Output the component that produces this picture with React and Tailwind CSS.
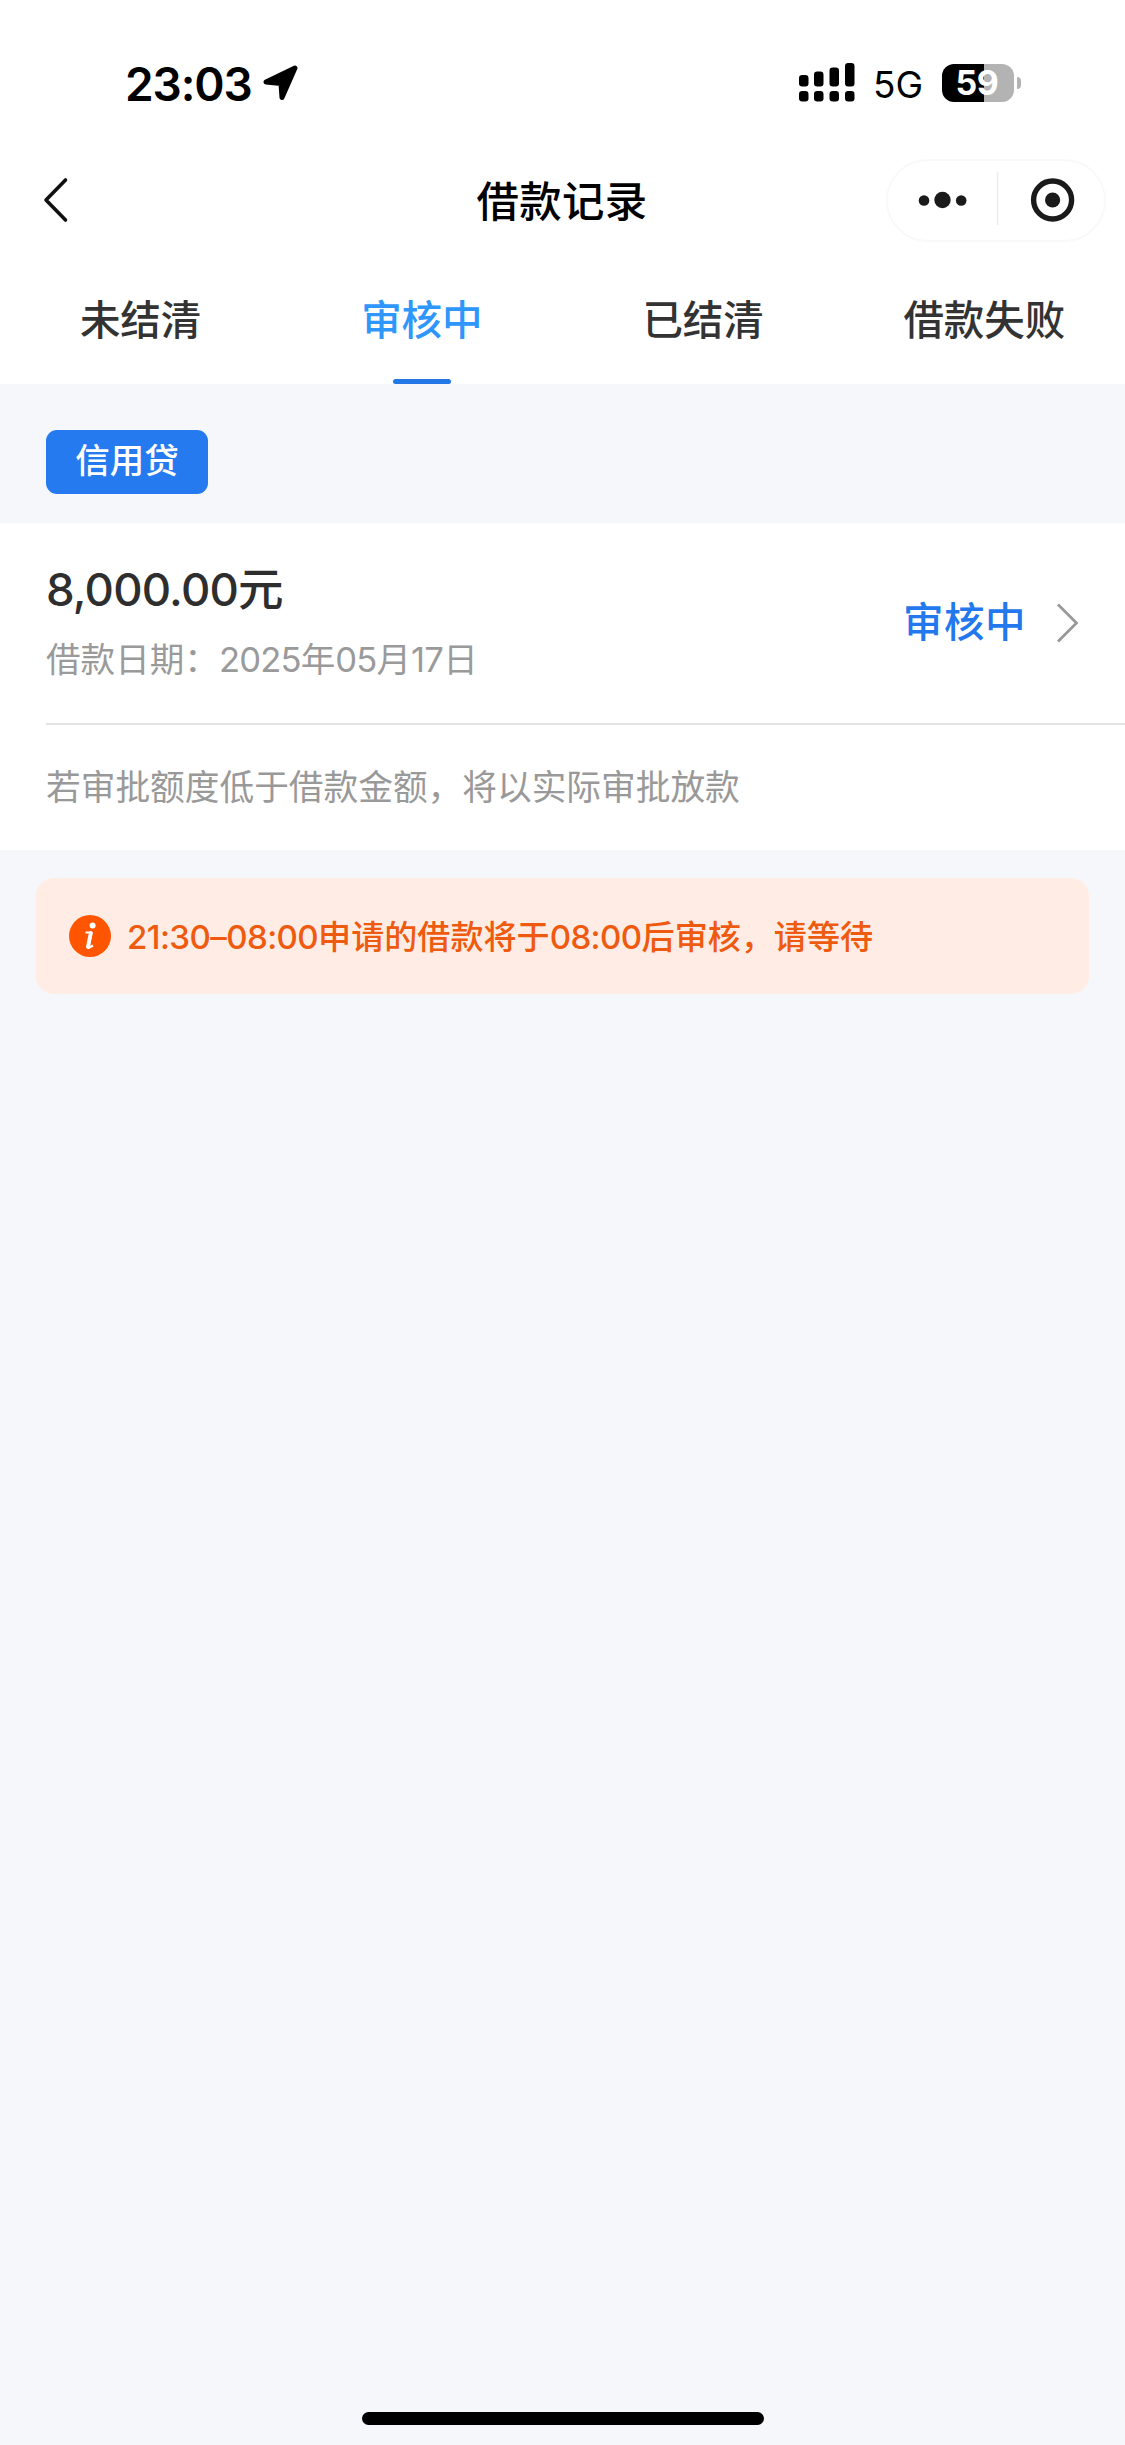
import { useState } from "react";

const tabs = [
  { id: "open", label: "未结清" },
  { id: "review", label: "审核中" },
  { id: "settled", label: "已结清" },
  { id: "failed", label: "借款失败" },
];

function StatusBar() {
  return (
    <div className="flex h-[146px] items-start justify-between pl-[125px] pr-[104px] pt-[60px]">
      <div className="flex h-[46px] items-center">
        <span className="w-[138px] pt-px text-[46px] font-semibold leading-[46px] tracking-[-1.1px] text-black">23:03</span>
        <svg className="h-[36px] w-[36px]" viewBox="0 0 36 36">
          <path d="M32 3 L19 32.5 L18 18.5 L3 17 Z" fill="#000" stroke="#000" strokeWidth="5" strokeLinejoin="round" />
        </svg>
      </div>

      <div className="flex h-[46px] items-center">
        {/* Dual SIM signal */}
        <svg className="h-[40px] w-[56px]" viewBox="0 0 56 40" fill="#000">
          <rect x="0" y="12" width="9.5" height="11.5" rx="3.2" />
          <rect x="15" y="8.5" width="9.5" height="15" rx="3.2" />
          <rect x="30.5" y="4.5" width="9.5" height="19" rx="3.2" />
          <rect x="46" y="0" width="9.5" height="23.5" rx="3.2" />
          <rect x="0" y="28" width="9.5" height="10.5" rx="3.2" />
          <rect x="15" y="28" width="9.5" height="10.5" rx="3.2" />
          <rect x="30.5" y="28" width="9.5" height="10.5" rx="3.2" />
          <rect x="46" y="28" width="9.5" height="10.5" rx="3.2" />
        </svg>
        <span className="ml-[18px] w-[69px] pt-[3px] text-[37px] leading-[46px] text-black">5G</span>
        <div className="flex h-[38px] w-[72px] items-center justify-center rounded-[12px] bg-linear-to-r from-black from-[59%] to-[#b3b3b3] to-[59%]">
          <span className="pr-[2px] text-[34px] font-bold leading-[38px] tracking-[-0.5px] text-white">59</span>
        </div>
        <div className="ml-[3px] h-[12px] w-[4px] rounded-r-full bg-[#b3b3b3]" />
      </div>
    </div>
  );
}

function NavBar() {
  return (
    <div className="grid h-[108px] grid-cols-3 items-center pl-[42px] pr-[19px]">
      <svg className="h-[46px] w-[28px]" viewBox="0 0 28 46" fill="none">
        <path d="M23.5 3 L4 23 L23.5 43" stroke="#111" strokeWidth="3.6" strokeLinecap="round" strokeLinejoin="round" />
      </svg>
      <h1 className="-ml-[24px] whitespace-nowrap pt-[4px] text-center text-[42.4px] font-medium leading-[60px] tracking-[0.3px] text-black">借款记录</h1>
      <div className="flex h-[83px] w-[220px] items-center justify-self-end rounded-full border-2 border-[#f9f9f9]">
        <svg className="h-full w-full" viewBox="0 0 216 79">
          <circle cx="36" cy="39.5" r="5.3" fill="#1a1a1a" />
          <circle cx="54.5" cy="39" r="8.2" fill="#1a1a1a" />
          <circle cx="73.2" cy="39.5" r="5.3" fill="#1a1a1a" />
          <path d="M109.5 11 V64" stroke="#ececec" strokeWidth="1.5" />
          <circle cx="164.6" cy="39" r="19" fill="none" stroke="#1a1a1a" strokeWidth="5.4" />
          <circle cx="164.6" cy="39" r="7.6" fill="#1a1a1a" />
        </svg>
      </div>
    </div>
  );
}

function LoanCard() {
  return (
    <section className="h-[327px] bg-white pl-[46px]">
      <div className="flex h-[202px] items-center justify-between border-b-2 border-[#e4e4e4] pr-[46px]">
        <div className="pb-[4px]">
          <p className="text-[45.5px] font-medium leading-[64px] tracking-[-0.8px] text-[#2e2e2e]">8,000.00元</p>
          <p className="mt-[12px] text-[34.6px] leading-[50px] text-[#9a9a9a]">
            借款日期：<span className="tracking-[-0.8px]">2025</span>年<span className="tracking-[-0.8px]">05</span>月
            <span className="tracking-[-0.8px]">17</span>日
          </p>
        </div>
        <div className="flex items-center gap-[29px]">
          <span className="text-[40.5px] font-medium leading-[56px] tracking-[0.5px] text-[#2378ee]">审核中</span>
          <svg className="h-[42px] w-[24px]" viewBox="0 0 24 42" fill="none">
            <path d="M3 2.5 L21.5 21 L3 39.5" stroke="#999" strokeWidth="2.8" />
          </svg>
        </div>
      </div>
      <p className="pt-[37px] text-[34.7px] leading-[50px] text-[#999]">若审批额度低于借款金额，将以实际审批放款</p>
    </section>
  );
}

export default function App() {
  const [active, setActive] = useState("review");

  return (
    <div className="flex h-[2445px] w-[1125px] flex-col bg-[#f5f7fb] font-['Inter','Noto_Sans_CJK_SC',sans-serif]">
      <header className="h-[384px] bg-white">
        <StatusBar />
        <NavBar />
        <nav className="grid h-[130px] grid-cols-4">
          {tabs.map((tab) => (
            <button
              key={tab.id}
              onClick={() => setActive(tab.id)}
              className={`flex flex-col items-center justify-between pt-[38px] text-[40.5px] font-medium leading-[58px] ${
                active === tab.id ? "text-[#2f96fb]" : "text-[#333]"
              }`}
            >
              <span>{tab.label}</span>
              {active === tab.id && <span className="h-[5px] w-[58px] rounded-full bg-[#2378e8]" />}
            </button>
          ))}
        </nav>
      </header>

      <div className="flex h-[139px] items-start pl-[46px] pt-[46px]">
        <span className="flex h-[64px] w-[162px] items-center justify-center rounded-[11px] bg-[#257af0] pb-[2px] text-[34.5px] font-medium text-white">
          信用贷
        </span>
      </div>

      <LoanCard />

      {/* Overnight review notice */}
      <div className="mx-[36px] mt-[28px] flex h-[116px] items-center rounded-[18px] bg-[#ffede5] pl-[33px]">
        <svg className="h-[42px] w-[42px]" viewBox="0 0 42 42">
          <circle cx="21" cy="21" r="21" fill="#ff5500" />
          <circle cx="23.6" cy="10.5" r="3" fill="#fff" />
          <path d="M16.5 17.5 H22.5 L19.4 33 L24 30.5" fill="none" stroke="#fff" strokeWidth="2.2" strokeLinejoin="round" />
          <path d="M21.8 18 L18.9 32" stroke="#fff" strokeWidth="3.8" strokeLinecap="round" />
        </svg>
        <span className="ml-[16px] whitespace-nowrap pt-px text-[33.1px] font-medium leading-[48px] text-[#ee5a10]">
          <span className="tracking-[-0.6px]">21:30–08:00</span>申请的借款将于
          <span className="tracking-[-0.6px]">08:00</span>后审核，请等待
        </span>
      </div>

      <div className="mx-auto mb-[20px] mt-auto h-[13px] w-[402px] rounded-full bg-black" />
    </div>
  );
}
